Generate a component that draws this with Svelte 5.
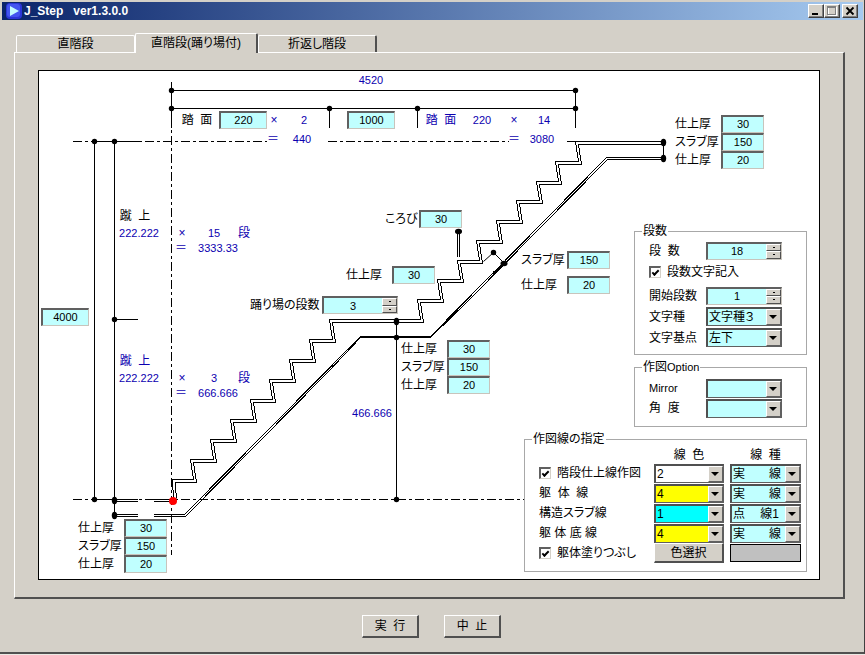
<script>
	const tabs = ['直階段', '直階段(踊り場付)', '折返し階段'];
	let activeTab = 1;

	// corner points of one flight, each riser leans back by 3px
	function flight(x, y, count, dx, dy) {
		const points = [];
		for (let i = 0; i < count; i++) {
			points.push([Math.round(x + dx * i) + 3, Math.round(y - dy * i)]);
			points.push([Math.round(x + dx * i), Math.round(y - dy * (i + 1))]);
		}
		return points;
	}

	const lower = flight(151, 408, 8, 139 / 7, 20);
	const upper = flight(378, 248, 9, 158 / 8, 178 / 9);
	const outer = [[134, 428], [133, 408], ...lower, ...upper, [624, 70]];
	const inner = outer.map(([x, y]) => [x + 3, y + 3]);

	const dots = [
		[132, 19], [536, 19], [132, 37], [290, 37], [378, 37], [536, 37],
		[55, 70], [75, 70], [75, 248], [55, 428], [357, 428], [357, 266], [454, 181]
	];
	const longDots = [
		[75, 429], [75, 444], [357, 250], [624, 71], [624, 87]
	];

	const notes = [
		{ x: 332, y: 8, text: '4520' },
		{ x: 158, y: 48, text: '踏\u00a0\u00a0面', big: true, dark: true },
		{ x: 235, y: 48, text: '×', big: true },
		{ x: 265, y: 48, text: '2' },
		{ x: 234, y: 67, text: '＝', big: true },
		{ x: 263, y: 67, text: '440' },
		{ x: 402, y: 48, text: '踏\u00a0\u00a0面', big: true },
		{ x: 443, y: 48, text: '220' },
		{ x: 475, y: 48, text: '×', big: true },
		{ x: 505, y: 48, text: '14' },
		{ x: 475, y: 67, text: '＝', big: true },
		{ x: 503, y: 67, text: '3080' },
		{ x: 96, y: 144, text: '蹴\u00a0\u00a0上', big: true, dark: true },
		{ x: 100, y: 161, text: '222.222' },
		{ x: 143, y: 161, text: '×', big: true },
		{ x: 175, y: 161, text: '15' },
		{ x: 205, y: 161, text: '段', big: true },
		{ x: 142, y: 176, text: '＝', big: true },
		{ x: 179, y: 176, text: '3333.33' },
		{ x: 96, y: 289, text: '蹴\u00a0\u00a0上', big: true },
		{ x: 100, y: 306, text: '222.222' },
		{ x: 143, y: 306, text: '×', big: true },
		{ x: 175, y: 306, text: '3' },
		{ x: 205, y: 306, text: '段', big: true },
		{ x: 142, y: 321, text: '＝', big: true },
		{ x: 179, y: 321, text: '666.666' },
		{ x: 333, y: 341, text: '466.666' }
	];

	// fields pinned on the drawing, in canvas coordinates
	const pins = [
		{ x: 180, y: 40, wide: true, rows: [['', '220', '踏面']] },
		{ x: 308, y: 40, wide: true, rows: [['', '1000', '踊り場']] },
		{ x: 2, y: 237, wide: true, rows: [['', '4000', '階高']] },
		{ x: 636, y: 44, rows: [['仕上厚', '30'], ['スラブ厚', '150'], ['仕上厚', '20']] },
		{ x: 362, y: 269, rows: [['仕上厚', '30'], ['スラブ厚', '150'], ['仕上厚', '20']] },
		{ x: 39, y: 448, rows: [['仕上厚', '30'], ['スラブ厚', '150'], ['仕上厚', '20']] },
		{ x: 346, y: 139, short: true, rows: [['ころび', '30']] },
		{ x: 307, y: 195, rows: [['仕上厚', '30']] },
		{ x: 482, y: 180, rows: [['スラブ厚', '150']] },
		{ x: 482, y: 205, rows: [['仕上厚', '20']] }
	];

	const lines = [
		{ label: '階段仕上線作図', check: true, color: '2', tone: 'white', type: '実　　線' },
		{ label: '躯\u00a0\u00a0体\u00a0\u00a0線', color: '4', tone: 'yellow', type: '実　　線' },
		{ label: '構造スラブ線', color: '1', tone: 'cyan', type: '点　 線1' },
		{ label: '躯\u00a0体\u00a0底\u00a0線', color: '4', tone: 'yellow', type: '実　　線' }
	];
</script>

<div class="window">
	<header class="titlebar">
		<svg class="logo" width="16" height="16" viewBox="0 0 16 16">
			<rect width="16" height="16" rx="4" fill="#2b35d8" />
			<rect x="1" y="1" width="13" height="13" rx="3" fill="#4355f0" />
			<path d="M4 3 L13 8 L4 13 Z" fill="#c4fbff" />
		</svg>
		<h1>J_Step&nbsp;&nbsp;&nbsp;ver1.3.0.0</h1>
		<button class="sys" aria-label="最小化">
			<svg width="12" height="10" shape-rendering="crispEdges"><path d="M2 8h6" stroke="#000" stroke-width="2" /></svg>
		</button>
		<button class="sys" aria-label="最大化">
			<svg width="12" height="10" shape-rendering="crispEdges">
				<rect x="2.5" y="1.5" width="8" height="8" fill="none" stroke="#fff" />
				<path d="M1.5 0.5h8v8h-8zM1 1.5h9" fill="none" stroke="#808080" />
			</svg>
		</button>
		<button class="sys close" aria-label="閉じる">
			<svg width="12" height="10"><path d="M2.5 1.5l7 7M9.5 1.5l-7 7" stroke="#000" stroke-width="1.8" /></svg>
		</button>
	</header>

	<main>
		<div class="tabs" role="tablist">
			{#each tabs as tab, i}
				<button class="tab" class:active={i === activeTab} role="tab" aria-selected={i === activeTab} on:click={() => (activeTab = i)}>{tab}</button>
			{/each}
		</div>

		<div class="panel">
			<div class="canvas">
				<svg class="drawing" width="780" height="508" viewBox="0 0 780 508">
					<g class="lines" transform="translate(0.5 0.5)">
						<path class="dash" d="M132 10V483M33 70H227M288 70H469M527 70H536M33 428H485" />
						<path d="M132 19V56M132 19H536M132 37H536M536 19V56M290 37V56M378 37V56" />
						<path d="M55 70V428M75 70V445M55 70H100M55 428H75M75 248H98" />
						<path d="M75 428H98M75 430H98M114 428H132M114 430H132M75 443H98M75 445H98" />
						<path d="M357 248V428M624 70V88M418 161V185M420 161V185" />
						<path d="M114 443H145L321 265H391L567 86H624" />
						<path d="M114 445H146L288 301L321 266H391L430 228L568 88H624" />
						<polyline points={outer.join(' ')} />
						<polyline points={inner.join(' ')} clip-path="url(#drawn)" />
						<path class="thin" d="M444 190L454 181L465 192" />
						<path class="thick" d="M454 202L465 192" />
					</g>
					<clipPath id="drawn"><rect width="625" height="427" /></clipPath>
					{#each dots as [x, y]}
						<circle cx={x + 0.5} cy={y + 0.5} r="2.7" />
					{/each}
					{#each longDots as [x, y]}
						<ellipse cx={x + 0.5} cy={y + 0.5} rx="2.7" ry="3.7" />
					{/each}
					<ellipse cx="419.5" cy="160.5" rx="3.5" ry="2.7" />
					<ellipse cx="465" cy="192.5" rx="3.5" ry="2.7" />
					<circle class="origin" cx="134" cy="430" r="4" />
					{#each notes as note}
						<text x={note.x} y={note.y + 5} class:dark={note.dark} class:big={note.big}>{note.text}</text>
					{/each}
				</svg>

				{#each pins as pin}
					<div class="pin" class:short={pin.short} style="left: {pin.x}px; top: {pin.y}px">
						{#each pin.rows as [label, value, name]}
							<label class="pin-row">
								{#if label}<span>{label}</span>{/if}
								<input class="field" class:wide={pin.wide} type="text" {value} aria-label={name} />
							</label>
						{/each}
					</div>
				{/each}

				<div class="pin landing">
					<label class="pin-row" for="landing">踊り場の段数</label>
					<div class="spin">
						<input id="landing" type="text" value="3" />
						<div class="arrows"><button aria-label="増やす"></button><button aria-label="減らす"></button></div>
					</div>
				</div>

				<div class="options">
					<fieldset class="steps">
						<legend>段数</legend>
						<div class="row">
							<label for="count">段&nbsp;&nbsp;数</label>
							<div class="spin">
								<input id="count" type="text" value="18" />
								<div class="arrows"><button aria-label="増やす"></button><button aria-label="減らす"></button></div>
							</div>
						</div>
						<label class="check"><input type="checkbox" checked />段数文字記入</label>
						<div class="row">
							<label for="start">開始段数</label>
							<div class="spin">
								<input id="start" type="text" value="1" />
								<div class="arrows"><button aria-label="増やす"></button><button aria-label="減らす"></button></div>
							</div>
						</div>
						<div class="row">
							<label for="font">文字種</label>
							<div class="select"><select id="font"><option>文字種３</option></select></div>
						</div>
						<div class="row">
							<label for="base">文字基点</label>
							<div class="select"><select id="base"><option>左下</option></select></div>
						</div>
					</fieldset>

					<fieldset class="extra">
						<legend>作図<span class="latin">Option</span></legend>
						<div class="row">
							<label class="latin" for="mirror">Mirror</label>
							<div class="select"><select id="mirror"><option></option></select></div>
						</div>
						<div class="row">
							<label for="angle">角&nbsp;&nbsp;度</label>
							<div class="select"><select id="angle"><option></option></select></div>
						</div>
					</fieldset>

					<fieldset class="strokes">
						<legend>作図線の指定</legend>
						<div class="stroke-row head">
							<span></span><span>線&nbsp;&nbsp;色</span><span>線&nbsp;&nbsp;種</span>
						</div>
						{#each lines as line, i}
							<div class="stroke-row">
								{#if line.check}
									<label class="check"><input type="checkbox" checked />{line.label}</label>
								{:else}
									<label for="color{i}">{line.label}</label>
								{/if}
								<div class="select {line.tone}"><select id="color{i}" aria-label="線色"><option>{line.color}</option></select></div>
								<div class="select"><select aria-label="線種"><option>{line.type}</option></select></div>
							</div>
						{/each}
						<div class="stroke-row">
							<label class="check"><input type="checkbox" checked />躯体塗りつぶし</label>
							<button class="btn pick">色選択</button>
							<div class="swatch"></div>
						</div>
					</fieldset>
				</div>
			</div>
		</div>

		<div class="actions">
			<button class="btn">実&nbsp;&nbsp;行</button>
			<button class="btn">中&nbsp;&nbsp;止</button>
		</div>
	</main>
</div>

<style>
	:global(body) {
		margin: 0;
		background: #ece9e4;
	}

	.window {
		box-sizing: border-box;
		padding: 2px 1px 0 2px;
		background: #d4d0c8;
		border-right: 1px solid #404040;
		border-bottom: 2px solid #505050;
		font: 12px/14px 'Liberation Sans', 'Noto Sans CJK JP', sans-serif;
		font-feature-settings: 'palt';
		color: #000;
	}

	input,
	select,
	button {
		box-sizing: border-box;
		margin: 0;
		padding: 0;
		border: 0;
		border-radius: 0;
		font: inherit;
		font-feature-settings: inherit;
		color: inherit;
		outline: 0;
	}

	.titlebar {
		display: flex;
		align-items: center;
		height: 18px;
		padding: 0 5px 0 4px;
		background: linear-gradient(to right, #0a246a, #a6caf0);
		color: #fff;
	}

	h1 {
		flex: 1;
		margin: 0 0 0 2px;
		font-size: 12px;
		line-height: 16px;
	}

	.sys {
		display: flex;
		align-items: center;
		justify-content: center;
		width: 16px;
		height: 14px;
		background: #d4d0c8;
		border: 1px solid;
		border-color: #fff #404040 #404040 #fff;
		box-shadow: inset -1px -1px #808080;
	}

	.close {
		margin-left: 2px;
	}

	main {
		padding: 13px 18px 14px 12px;
	}

	.tabs {
		display: flex;
		align-items: flex-end;
		padding-left: 2px;
	}

	.tab {
		width: 119px;
		height: 17px;
		background: #d4d0c8;
		border: 1px solid #fff;
		border-bottom: 0;
		border-radius: 2px 2px 0 0;
	}

	.tab:last-child {
		border-right: 2px solid #505050;
	}

	.tab.active {
		position: relative;
		width: 123px;
		height: 20px;
		margin-bottom: -1px;
		padding-bottom: 2px;
		border-right: 2px solid #505050;
	}

	.panel {
		padding: 17px 23px;
		border: solid;
		border-width: 1px 2px 2px 1px;
		border-color: #fff #505050 #505050 #fff;
	}

	.canvas {
		position: relative;
		display: grid;
		background: #fff;
		border: 1px solid #000;
	}

	.drawing,
	.options {
		grid-area: 1 / 1;
	}

	.drawing {
		display: block;
	}

	.lines {
		fill: none;
		stroke: #000;
		shape-rendering: crispEdges;
	}

	.dash {
		stroke-dasharray: 9 3 3 3;
	}

	.thin {
		stroke-width: 1;
		shape-rendering: auto;
	}

	.thick {
		stroke-width: 3;
	}

	.origin {
		fill: #f00;
	}

	text {
		fill: #0c00b0;
		font-size: 11px;
		text-anchor: middle;
	}

	text.big {
		font-size: 12px;
	}

	text.dark {
		fill: #000;
	}

	.pin {
		position: absolute;
	}

	.pin-row {
		display: flex;
		align-items: center;
		height: 18px;
		white-space: nowrap;
	}

	.pin-row span {
		width: 46px;
	}

	.short span {
		width: 34px;
	}

	.field,
	.spin,
	.select {
		box-sizing: border-box;
		background: #c0ffff;
		border: solid;
		border-width: 2px 1px 1px 2px;
		border-color: #606060 #c8c4bc #c8c4bc #606060;
	}

	.field {
		width: 43px;
		height: 18px;
		padding-bottom: 1px;
		font-size: 11px;
		text-align: center;
	}

	.field.wide {
		width: 48px;
	}

	.landing {
		left: 211px;
		top: 225px;
		display: flex;
		gap: 3px;
	}

	.landing .pin-row {
		width: 69px;
	}

	.spin {
		display: flex;
		width: 76px;
		height: 18px;
	}

	.spin input {
		flex: 1;
		min-width: 0;
		background: transparent;
		font-size: 11px;
		text-align: center;
	}

	.arrows {
		display: flex;
		flex-direction: column;
		width: 15px;
	}

	.arrows button {
		flex: 1;
		background: linear-gradient(#000, #000) center / 2px 1px no-repeat #d4d0c8;
		border: 1px solid;
		border-color: #fff #505050 #505050 #fff;
	}

	.options {
		position: relative;
		display: flex;
		flex-direction: column;
		align-items: flex-end;
		justify-self: end;
		align-self: end;
		gap: 5px;
		padding: 0 12px 7px 0;
	}

	fieldset {
		box-sizing: border-box;
		width: 173px;
		margin: 0;
		padding: 2px 9px 6px 14px;
		border: 1px solid #a8a8a8;
		background: #fff;
	}

	legend {
		margin-left: -7px;
		padding: 0 1px;
	}

	.latin {
		font-size: 11px;
	}

	.row {
		display: grid;
		grid-template-columns: 57px 76px;
		align-items: center;
		height: 21px;
	}

	.extra {
		padding: 4px 9px 8px 14px;
	}

	.extra .row {
		height: 20px;
	}

	.check {
		display: flex;
		align-items: center;
		gap: 6px;
		white-space: nowrap;
	}

	.steps .check {
		height: 21px;
		margin: 0 0 3px;
	}

	.check input {
		appearance: none;
		width: 12px;
		height: 12px;
		background: #fff;
		border: solid;
		border-width: 2px 1px 1px 2px;
		border-color: #606060 #d4d0c8 #d4d0c8 #606060;
	}

	.check input:checked::before {
		content: '';
		display: block;
		width: 5px;
		height: 2px;
		margin: 2px 0 0 1px;
		border: solid #000;
		border-width: 0 0 2px 2px;
		transform: rotate(-45deg);
	}

	.select {
		position: relative;
		height: 19px;
		border-color: #505050 #606060 #606060 #505050;
	}

	.select select {
		display: block;
		width: 100%;
		height: 16px;
		padding-left: 1px;
		appearance: none;
		background: transparent;
	}

	.select::after {
		content: '';
		position: absolute;
		top: 0;
		right: 0;
		box-sizing: border-box;
		width: 15px;
		height: 16px;
		background: #d4d0c8;
		border: 1px solid;
		border-color: #fff #606060 #606060 #fff;
		pointer-events: none;
	}

	.select::before {
		content: '';
		position: absolute;
		top: 6px;
		right: 4px;
		z-index: 1;
		border: solid transparent;
		border-width: 4px 4px 0;
		border-top-color: #000;
		pointer-events: none;
	}

	.white {
		background: #fff;
	}

	.yellow {
		background: #ff0;
	}

	.cyan {
		background: #0ff;
	}

	.strokes {
		width: 283px;
		padding: 0 5px 8px 14px;
	}

	.stroke-row {
		display: grid;
		grid-template-columns: 1fr 70px 71px;
		column-gap: 6px;
		align-items: center;
		height: 20px;
	}

	.stroke-row.head {
		height: 17px;
		text-align: center;
	}

	.btn {
		width: 57px;
		height: 23px;
		background: #d4d0c8;
		border: solid;
		border-width: 1px 2px 2px 1px;
		border-color: #fff #505050 #505050 #fff;
	}

	.pick {
		width: 70px;
		height: 20px;
	}

	.swatch {
		box-sizing: border-box;
		height: 18px;
		background: #c0c0c0;
		border: 1px solid #000;
	}

	.actions {
		display: flex;
		justify-content: center;
		gap: 25px;
		padding: 16px 0 0 4px;
	}
</style>
